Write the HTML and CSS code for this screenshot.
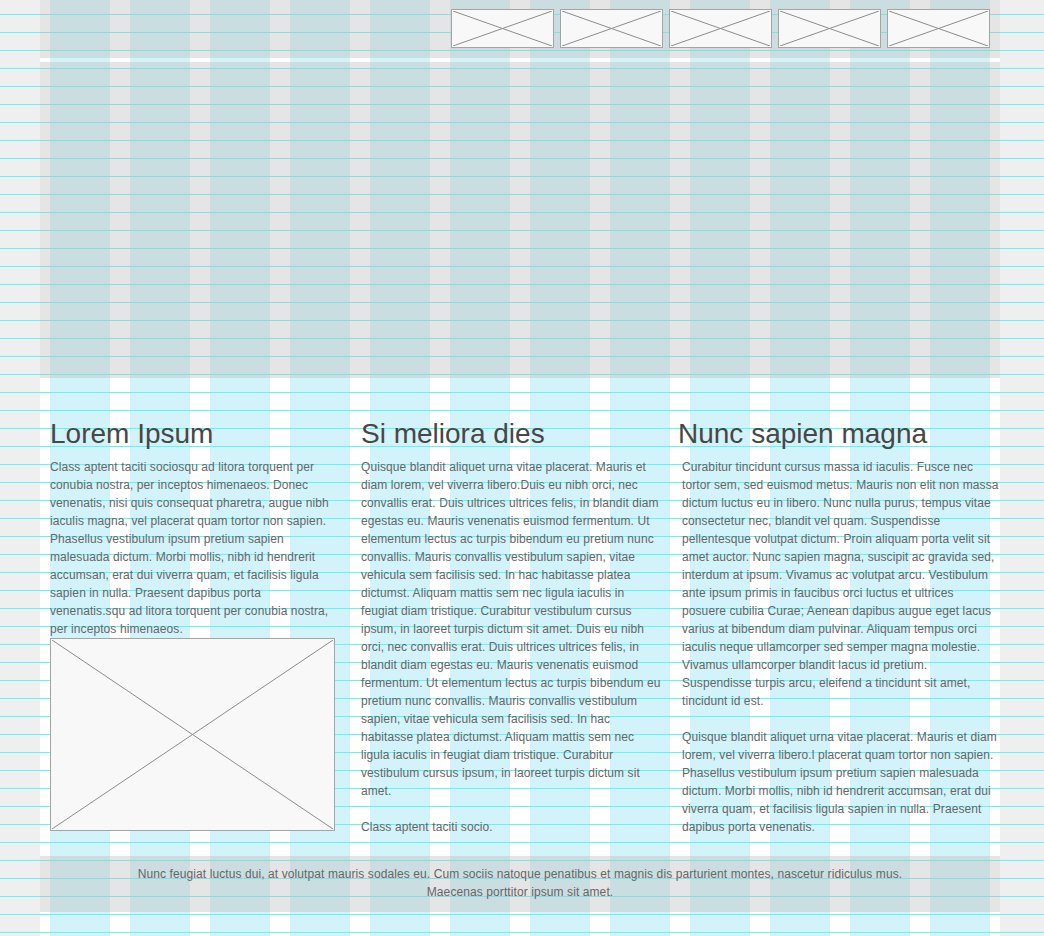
FILE: index.html
```html
<!DOCTYPE html>
<html lang="en">
<head>
<meta charset="utf-8">
<title>Grid layout</title>
<link rel="stylesheet" href="styles.css">
</head>
<body>
<div class="page">
  <header class="topbar">
    <ul class="thumbs">
      <li class="ph"><svg viewBox="0 0 100 100" preserveAspectRatio="none"><line x1="0" y1="0" x2="100" y2="100"/><line x1="100" y1="0" x2="0" y2="100"/></svg></li>
      <li class="ph"><svg viewBox="0 0 100 100" preserveAspectRatio="none"><line x1="0" y1="0" x2="100" y2="100"/><line x1="100" y1="0" x2="0" y2="100"/></svg></li>
      <li class="ph"><svg viewBox="0 0 100 100" preserveAspectRatio="none"><line x1="0" y1="0" x2="100" y2="100"/><line x1="100" y1="0" x2="0" y2="100"/></svg></li>
      <li class="ph"><svg viewBox="0 0 100 100" preserveAspectRatio="none"><line x1="0" y1="0" x2="100" y2="100"/><line x1="100" y1="0" x2="0" y2="100"/></svg></li>
      <li class="ph"><svg viewBox="0 0 100 100" preserveAspectRatio="none"><line x1="0" y1="0" x2="100" y2="100"/><line x1="100" y1="0" x2="0" y2="100"/></svg></li>
    </ul>
  </header>
  <div class="hero"></div>
  <main class="columns">
    <section class="col col-a">
      <h2>Lorem Ipsum</h2>
      <p>Class aptent taciti sociosqu ad litora torquent per<br>
conubia nostra, per inceptos himenaeos. Donec<br>
venenatis, nisi quis consequat pharetra, augue nibh<br>
iaculis magna, vel placerat quam tortor non sapien.<br>
Phasellus vestibulum ipsum pretium sapien<br>
malesuada dictum. Morbi mollis, nibh id hendrerit<br>
accumsan, erat dui viverra quam, et facilisis ligula<br>
sapien in nulla. Praesent dapibus porta<br>
venenatis.squ ad litora torquent per conubia nostra,<br>
per inceptos himenaeos.</p>
      <div class="ph ph-large"><svg viewBox="0 0 100 100" preserveAspectRatio="none"><line x1="0" y1="0" x2="100" y2="100"/><line x1="100" y1="0" x2="0" y2="100"/></svg></div>
    </section>
    <section class="col col-b">
      <h2>Si meliora dies</h2>
      <p>Quisque blandit aliquet urna vitae placerat. Mauris et<br>
diam lorem, vel viverra libero.Duis eu nibh orci, nec<br>
convallis erat. Duis ultrices ultrices felis, in blandit diam<br>
egestas eu. Mauris venenatis euismod fermentum. Ut<br>
elementum lectus ac turpis bibendum eu pretium nunc<br>
convallis. Mauris convallis vestibulum sapien, vitae<br>
vehicula sem facilisis sed. In hac habitasse platea<br>
dictumst. Aliquam mattis sem nec ligula iaculis in<br>
feugiat diam tristique. Curabitur vestibulum cursus<br>
ipsum, in laoreet turpis dictum sit amet. Duis eu nibh<br>
orci, nec convallis erat. Duis ultrices ultrices felis, in<br>
blandit diam egestas eu. Mauris venenatis euismod<br>
fermentum. Ut elementum lectus ac turpis bibendum eu<br>
pretium nunc convallis. Mauris convallis vestibulum<br>
sapien, vitae vehicula sem facilisis sed. In hac<br>
habitasse platea dictumst. Aliquam mattis sem nec<br>
ligula iaculis in feugiat diam tristique. Curabitur<br>
vestibulum cursus ipsum, in laoreet turpis dictum sit<br>
amet.</p>
      <p>Class aptent taciti socio.</p>
    </section>
    <section class="col col-c">
      <h2>Nunc sapien magna</h2>
      <p>Curabitur tincidunt cursus massa id iaculis. Fusce nec<br>
tortor sem, sed euismod metus. Mauris non elit non massa<br>
dictum luctus eu in libero. Nunc nulla purus, tempus vitae<br>
consectetur nec, blandit vel quam. Suspendisse<br>
pellentesque volutpat dictum. Proin aliquam porta velit sit<br>
amet auctor. Nunc sapien magna, suscipit ac gravida sed,<br>
interdum at ipsum. Vivamus ac volutpat arcu. Vestibulum<br>
ante ipsum primis in faucibus orci luctus et ultrices<br>
posuere cubilia Curae; Aenean dapibus augue eget lacus<br>
varius at bibendum diam pulvinar. Aliquam tempus orci<br>
iaculis neque ullamcorper sed semper magna molestie.<br>
Vivamus ullamcorper blandit lacus id pretium.<br>
Suspendisse turpis arcu, eleifend a tincidunt sit amet,<br>
tincidunt id est.</p>
      <p>Quisque blandit aliquet urna vitae placerat. Mauris et diam<br>
lorem, vel viverra libero.l placerat quam tortor non sapien.<br>
Phasellus vestibulum ipsum pretium sapien malesuada<br>
dictum. Morbi mollis, nibh id hendrerit accumsan, erat dui<br>
viverra quam, et facilisis ligula sapien in nulla. Praesent<br>
dapibus porta venenatis.</p>
    </section>
  </main>
  <footer class="foot">
    <p>Nunc feugiat luctus dui, at volutpat mauris sodales eu. Cum sociis natoque penatibus et magnis dis parturient montes, nascetur ridiculus mus.<br>Maecenas porttitor ipsum sit amet.</p>
  </footer>
</div>
</body>
</html>
```

FILE: styles.css
```css
html, body {
  margin: 0;
  padding: 0;
}

body {
  background-color: #efefef;
  background-image: repeating-linear-gradient(to bottom, transparent 0 14px, #5ef6f6 14px 15px, transparent 15px 18px);
  font-family: "Liberation Sans", Arial, sans-serif;
  font-size: 12px;
  line-height: 18px;
  color: #666;
  min-height: 100vh;
}

.page {
  width: 960px;
  margin-left: 40px;
  min-height: 100vh;
  box-sizing: border-box;
  background-color: #fff;
  background-image:
    repeating-linear-gradient(to bottom, transparent 0 14px, #5ef6f6 14px 15px, transparent 15px 18px),
    repeating-linear-gradient(to right, transparent 0 10px, #d3f3fb 10px 70px, transparent 70px 80px);
  padding-bottom: 24px;
}

.topbar {
  height: 58px;
  background: rgba(190, 190, 190, 0.4);
  box-sizing: border-box;
  padding: 9px 10px 0 0;
  margin-bottom: 4px;
}

.thumbs {
  list-style: none;
  margin: 0;
  padding: 0;
  display: flex;
  justify-content: flex-end;
  gap: 6px;
}

.ph {
  display: block;
  box-sizing: border-box;
  border: 1px solid #a4a4a4;
  background: #f8f8f8;
  padding: 1px;
}

.ph svg {
  display: block;
  width: 100%;
  height: 100%;
}

.ph line {
  stroke: #8c8c8c;
  stroke-width: 1;
  vector-effect: non-scaling-stroke;
}

.thumbs .ph {
  width: 103px;
  height: 39px;
}

.hero {
  height: 316px;
  background: rgba(190, 190, 190, 0.4);
}

.columns {
  display: flex;
  align-items: flex-start;
  padding-left: 10px;
}

.col h2 {
  margin: 38px 0 6px;
  font-size: 28px;
  line-height: 36px;
  font-weight: normal;
  color: #474747;
}

.col p {
  margin: 0 0 18px;
  white-space: nowrap;
  letter-spacing: 0.09px;
}

.col p:last-of-type {
  margin-bottom: 0;
}

.col-a {
  width: 285px;
}

.col-b {
  width: 300px;
  margin-left: 26px;
}

.col-c {
  width: 322px;
  margin-left: 17px;
}

.col-c p {
  padding-left: 4px;
}

.ph-large {
  width: 285px;
  height: 193px;
}

.foot {
  margin-top: 20px;
  background: rgba(190, 190, 190, 0.4);
  padding: 9px 0 11px;
  text-align: center;
  letter-spacing: 0.09px;
}

.foot p {
  margin: 0;
}
```
